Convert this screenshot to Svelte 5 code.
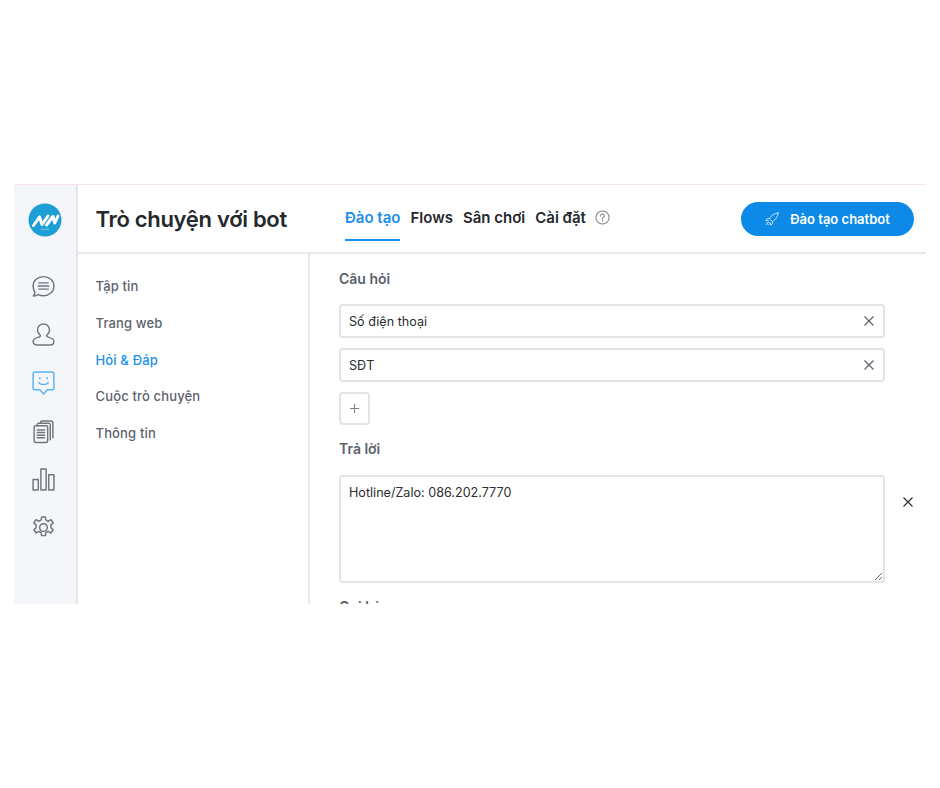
<script>
  const navItems = [
    { label: 'Tập tin' },
    { label: 'Trang web' },
    { label: 'Hỏi & Đáp', active: true },
    { label: 'Cuộc trò chuyện' },
    { label: 'Thông tin' }
  ];

  const tabs = [
    { label: 'Đào tạo', active: true },
    { label: 'Flows' },
    { label: 'Sân chơi' },
    { label: 'Cài đặt' }
  ];

  let questions = ['Số điện thoại', 'SĐT'];
  let answer = 'Hotline/Zalo: 086.202.7770';
</script>

<div class="page">
  <div class="frame">
    <aside class="rail">
      <svg class="logo" viewBox="0 0 34 34" aria-label="logo">
        <circle cx="17" cy="17" r="16.5" fill="#1d9fd6" />
        <g class="logo-mark">
          <path d="M5.500 22.500 L11.500 14 L14 21.500 L20 13" />
          <path d="M18.500 22 L25 13.500 L26.800 20 L30 13" />
        </g>
        <path d="M12.500 26.200h9" stroke="#8fd0ec" stroke-width="0.800" />
      </svg>
      <div class="rail-icons">
        <svg viewBox="0 0 24 24"><path d="M12 2.500c5.600 0 10 3.900 10 9.200s-4.400 9.200-10 9.200c-1.900 0-3.600-.4-5.100-1.200-1.300 1-2.900 1.500-4.700 1.400 1-1 1.500-2.100 1.500-3.400C2.900 16.100 2 14 2 11.700c0-5.300 4.400-9.200 10-9.200z" /><path d="M7.500 8.500h9M7 11.500h10M7.500 14.500h9" /></svg>
        <svg viewBox="0 0 24 24"><path d="M12 2c3.300 0 5.800 2.500 5.800 5.600 0 2-.9 3.600-2.400 4.700-.5.400-.6 1.500.2 1.800 1.700.6 3.400 1 4.700 2 1 .7 1.700 1.600 1.700 2.600 0 2-1.500 3.300-3.500 3.300H5.500C3.500 22 2 20.700 2 18.700c0-1 .7-1.900 1.700-2.600 1.300-1 3-1.400 4.700-2 .8-.3.700-1.400.2-1.800-1.500-1.100-2.400-2.700-2.400-4.700C6.200 4.500 8.700 2 12 2z" /></svg>
        <svg class="on" viewBox="0 0 24 24"><path d="M4 2h16c1.300 0 2 .7 2 2v13c0 1.300-.7 2-2 2h-4.500L12 23l-3.500-4H4c-1.300 0-2-.7-2-2V4c0-1.300.7-2 2-2z" /><path d="M7.500 12c1.200 2.600 7.800 2.600 9 0" /><path d="M8.500 7.500v1M15.500 7.500v1" /></svg>
        <svg viewBox="0 0 24 24"><rect x="3" y="6.500" width="13" height="16" rx="1.500" /><path d="M6 6.500V5.500c0-1 .5-1.500 1.500-1.500h9.500c1 0 1.500.5 1.500 1.500v14.500" /><path d="M9 4V3.500C9 2.500 9.500 2 10.500 2H19c1 0 2 .5 2 2v14" /><path d="M6 10.500h7M6 13h7M6 15.500h7M6 18h7" /></svg>
        <svg viewBox="0 0 24 24"><rect x="2" y="12" width="5" height="10" /><rect x="9.500" y="2" width="5" height="20" /><rect x="17" y="7.500" width="5" height="14.500" /></svg>
        <svg viewBox="0 0 24 24"><circle cx="12" cy="12" r="3.700" /><path d="M10.200 2h3.600l.6 3 2.100 1 2.700-1.500 2.100 3.200-2.300 2c.1.800.1 1.600 0 2.400l2.300 2-2.100 3.200-2.700-1.500-2.100 1-.6 3h-3.600l-.6-3-2.100-1-2.700 1.500-2.100-3.200 2.300-2c-.1-.8-.1-1.600 0-2.400l-2.300-2 2.100-3.200 2.700 1.500 2.100-1z" /></svg>
      </div>
    </aside>

    <div class="main">
      <header class="header">
        <h1>Trò chuyện với bot</h1>
        <nav class="tabs">
          {#each tabs as tab}
            <span class="tab" class:active={tab.active}>{tab.label}</span>
          {/each}
          <svg class="help" viewBox="0 0 16 16">
            <circle cx="8" cy="8" r="7" />
            <path d="M6 6.300c0-1.200.9-1.900 2-1.900s2 .7 2 1.800c0 1.500-2 1.600-2 3.100" />
            <path d="M8 11v.8" />
          </svg>
        </nav>
        <button class="train">
          <svg viewBox="0 0 16 16">
            <path d="M15 1C10.500 1.500 7.500 3.500 5 7.500L8.500 11C12.500 8.500 14.500 5.500 15 1z" />
            <path d="M5 7.500H2.500L1 9.500l3 .5M8.500 11v2.500L6.500 15 6 12" />
            <path d="M4 12l-2.500 2.500M2.500 11.500l-1 1M4.500 13.500l-1 1" />
          </svg>
          Đào tạo chatbot
        </button>
      </header>

      <div class="body">
        <ul class="side">
          {#each navItems as item}
            <li class:active={item.active}>{item.label}</li>
          {/each}
        </ul>

        <section class="form">
          <div class="label first">Câu hỏi</div>
          {#each questions as question}
            <div class="row">
              <input class="field" type="text" value={question} />
              <svg class="x" viewBox="0 0 12 12"><path d="M1.500 1.500l9 9M10.500 1.500l-9 9" /></svg>
            </div>
          {/each}
          <button class="add" aria-label="Thêm">
            <svg viewBox="0 0 12 12"><path d="M6 1v10M1 6h10" /></svg>
          </button>

          <div class="label answer">Trả lời</div>
          <div class="answer-row">
            <textarea class="field area" value={answer}></textarea>
            <svg class="x dark" viewBox="0 0 12 12"><path d="M1.500 1.500l9 9M10.500 1.500l-9 9" /></svg>
          </div>

          <div class="label next">Gọi hàm</div>
        </section>
      </div>
    </div>
  </div>
</div>

<style>
  :global(body) {
    margin: 0;
    background: #fff;
  }

  .page {
    width: 940px;
    height: 788px;
    padding: 184px 14px 0;
    box-sizing: border-box;
    font-family: Inter, "Noto Sans", sans-serif;
    color: #212529;
  }

  .frame {
    display: flex;
    height: 420px;
    border-top: 1px solid #f6e7e5;
    box-sizing: border-box;
    overflow: hidden;
  }

  .rail {
    width: 64px;
    flex: none;
    box-sizing: border-box;
    background: #f4f6fa;
    border-right: 2px solid #e4e6eb;
    display: flex;
    flex-direction: column;
    align-items: center;
  }

  .logo {
    width: 34px;
    height: 34px;
    margin: 18px 0 0 0;
  }

  .logo-mark {
    fill: none;
    stroke: #fff;
    stroke-width: 3;
    stroke-linejoin: round;
    stroke-linecap: round;
  }

  .rail-icons {
    display: flex;
    flex-direction: column;
    gap: 23.200px;
    margin-top: 37px;
    margin-right: 3px;
  }

  .rail-icons svg {
    display: block;
    width: 25px;
    height: 25px;
    fill: none;
    stroke: #6f7680;
    stroke-width: 1.400;
    stroke-linejoin: round;
    stroke-linecap: round;
  }

  .rail-icons svg.on {
    stroke: #5cb4f0;
  }

  .main {
    flex: 1;
    min-width: 0;
    display: flex;
    flex-direction: column;
  }

  .header {
    height: 69px;
    flex: none;
    box-sizing: border-box;
    border-bottom: 2px solid #e7e8ea;
    display: flex;
    align-items: flex-start;
    padding: 0 12px 0 17.500px;
  }

  h1 {
    margin: 20px 0 0;
    width: 249.500px;
    flex: none;
    font-size: 22px;
    line-height: 29px;
    font-weight: 600;
    letter-spacing: -0.300px;
    color: #25282c;
  }

  .tabs {
    display: flex;
    align-items: flex-start;
    gap: 10px;
    flex: 1;
  }

  .tab {
    padding: 23px 0 11px;
    font-size: 15px;
    line-height: 20px;
    font-weight: 600;
    color: #25282c;
    border-bottom: 2px solid transparent;
  }

  .tab.active {
    color: #1a8fec;
    border-bottom-color: #1a8fec;
  }

  .help {
    width: 15px;
    height: 15px;
    margin: 25px 0 0 -0.500px;
    fill: none;
    stroke: #7f848b;
    stroke-width: 1.100;
    stroke-linecap: round;
  }

  .train {
    margin-top: 17px;
    width: 173px;
    height: 34px;
    border: none;
    border-radius: 17px;
    background: #0d8ae8;
    color: #fff;
    font-family: inherit;
    font-size: 13px;
    font-weight: 600;
    display: flex;
    align-items: center;
    justify-content: center;
    gap: 11px;
    padding: 0;
  }

  .train svg {
    width: 14px;
    height: 14px;
    fill: none;
    stroke: #d5ebfb;
    stroke-width: 1;
    stroke-linejoin: round;
    stroke-linecap: round;
  }

  .body {
    flex: 1;
    display: flex;
    min-height: 0;
  }

  .side {
    width: 232px;
    flex: none;
    box-sizing: border-box;
    margin: 0;
    padding: 14.400px 0 0 17.500px;
    list-style: none;
    border-right: 2px solid #e7e8ea;
  }

  .side li {
    height: 36.700px;
    line-height: 36.700px;
    font-size: 13px;
    font-weight: 500;
    letter-spacing: 0.150px;
    color: #5c636c;
  }

  .side li.active {
    color: #1a8fec;
  }

  .form {
    flex: 1;
    min-width: 0;
    padding: 0 0 0 29px;
  }

  .label {
    font-size: 14px;
    line-height: 20px;
    font-weight: 600;
    color: #5a626c;
  }

  .label.first {
    margin: 15px 0 15px;
  }

  .label.answer {
    margin: 14px 0 16px;
  }

  .label.next {
    margin-top: 14px;
  }

  .row {
    position: relative;
    width: 546px;
    margin-bottom: 10px;
  }

  .field {
    display: block;
    width: 100%;
    height: 34px;
    box-sizing: border-box;
    padding: 0 8px;
    border: 2px solid #e3e4e6;
    border-radius: 4px;
    background: #fff;
    font-family: inherit;
    font-size: 12.600px;
    color: #2a2d31;
    outline: none;
  }

  .x {
    width: 12px;
    height: 12px;
    fill: none;
    stroke: #5b626b;
    stroke-width: 1.200;
  }

  .row .x {
    position: absolute;
    right: 10.500px;
    top: 11px;
  }

  .add {
    display: flex;
    align-items: center;
    justify-content: center;
    width: 31px;
    height: 33px;
    padding: 0;
    background: #fff;
    border: 2px solid #e3e4e6;
    border-radius: 4px;
  }

  .add svg {
    width: 11px;
    height: 11px;
    fill: none;
    stroke: #7b8188;
    stroke-width: 1.200;
  }

  .answer-row {
    display: flex;
    align-items: flex-start;
    gap: 16.500px;
  }

  .area {
    flex: none;
    width: 546px;
    height: 108px;
    padding: 7px 8px;
    line-height: 17px;
    resize: both;
  }

  .x.dark {
    margin-top: 21px;
    stroke: #2f3135;
  }
</style>
